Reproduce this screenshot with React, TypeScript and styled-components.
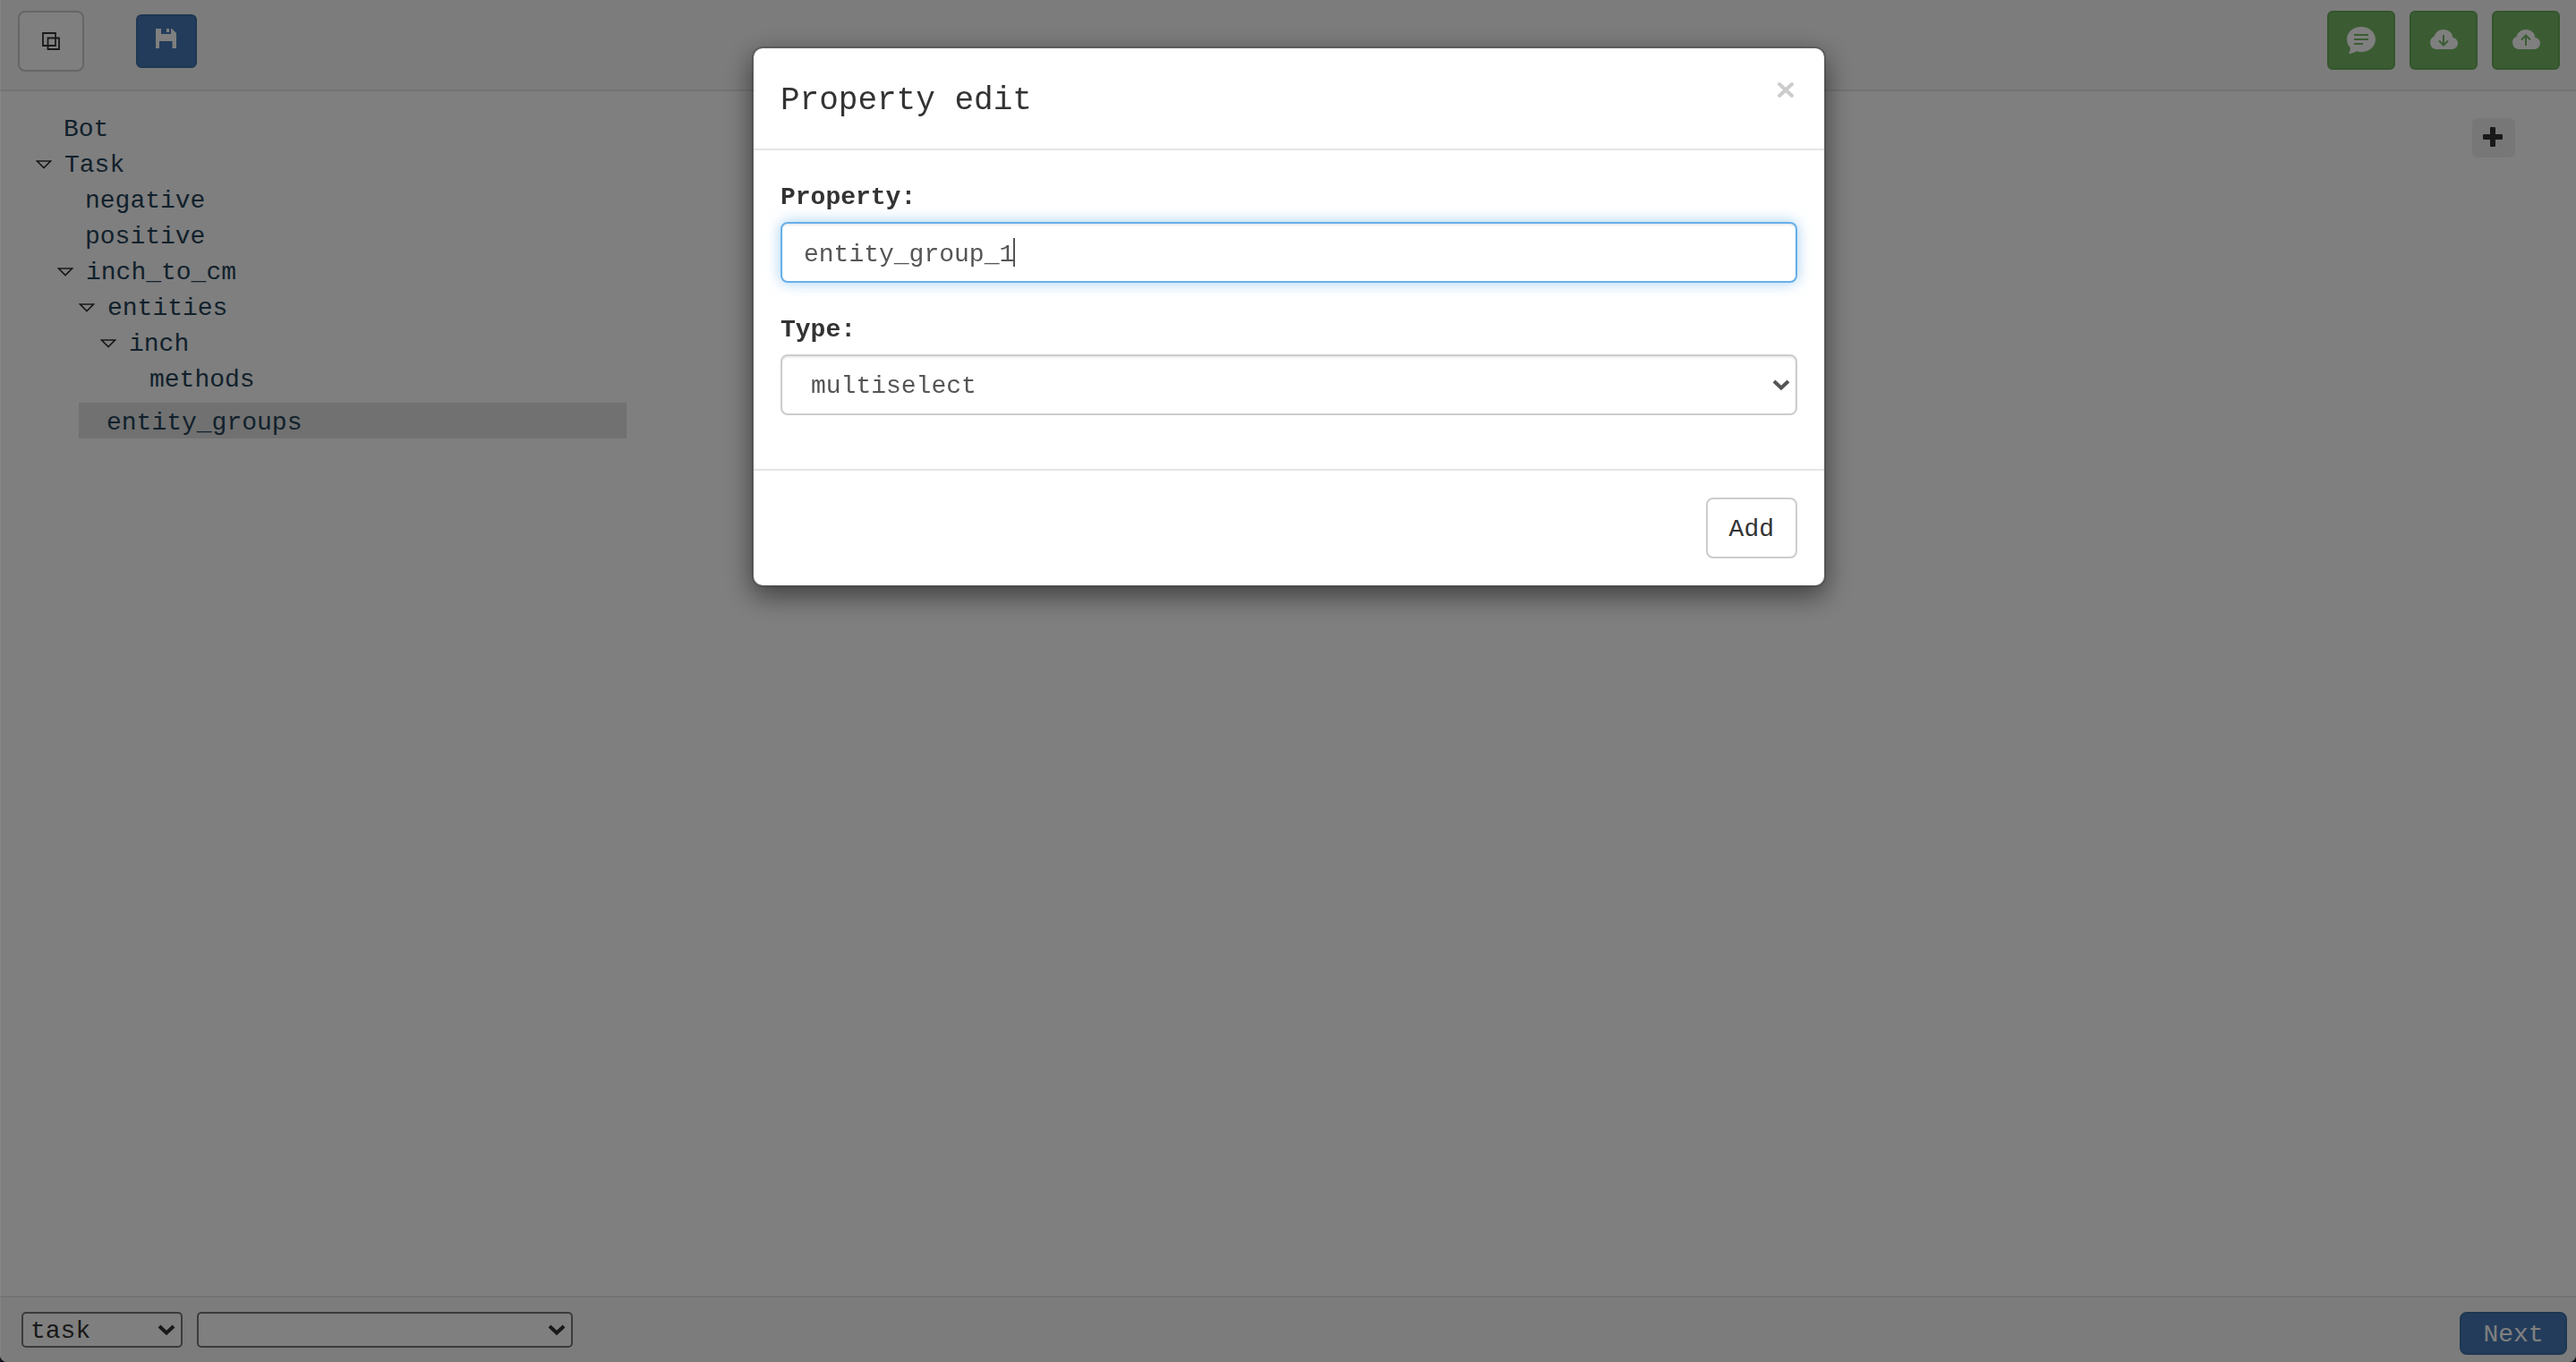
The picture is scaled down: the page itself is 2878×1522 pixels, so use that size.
import React, { useState } from "react";
import styled, { createGlobalStyle, css } from "styled-components";

const GlobalStyle = createGlobalStyle`
  *, *::before, *::after { box-sizing: border-box; }
  html { background: #10182c; }
  body {
    margin: 0;
    font-family: "Courier New", "Liberation Mono", monospace;
    font-size: 28px;
    line-height: 40px;
    color: #333;
  }
  button, input, select { font: inherit; margin: 0; }
`;

const Page = styled.div`
  display: flex;
  flex-direction: column;
  min-height: 100vh;
  overflow: hidden;
  border-radius: 0 0 8px 8px;
  background: #fff;
`;

const Toolbar = styled.header`
  display: flex;
  justify-content: space-between;
  align-items: flex-start;
  height: 102px;
  padding: 12px 18px 0 20px;
  background: #f8f8f8;
  border-bottom: 2px solid #e7e7e7;
`;

const ToolGroup = styled.div<{ $gap: number }>`
  display: flex;
  align-items: center;
  gap: ${(p) => p.$gap}px;
`;

const tones = {
  plain: css`
    background: #fff;
    border-color: #ccc;
    color: #333;
  `,
  primary: css`
    background: #4679b7;
    border-color: #3c6ea5;
    color: #fff;
  `,
  success: css`
    background: #76b866;
    border-color: #68aa58;
    color: #fff;
  `,
};

const Button = styled.button<{ $tone: keyof typeof tones }>`
  display: inline-flex;
  align-items: center;
  justify-content: center;
  padding: 4px 24px 0;
  border: 2px solid;
  border-radius: 8px;
  cursor: pointer;
  ${(p) => tones[p.$tone]}
`;

const CopyButton = styled(Button)`
  width: 74px;
  height: 68px;
  padding: 0;
`;

const SaveButton = styled(Button)`
  width: 68px;
  height: 60px;
  padding: 0 2px 6px 0;
  border-radius: 6px;
`;

const CloudButton = styled(Button)`
  width: 76px;
  height: 66px;
  padding: 0;
  border-radius: 6px;
`;

const NextButton = styled(Button)`
  min-width: 120px;
  height: 48px;
`;

const AddButton = styled(Button)`
  height: 68px;
`;

const Main = styled.main`
  display: flex;
  flex: 1;
  justify-content: space-between;
  align-items: flex-start;
  padding: 20px 68px 0 40px;
`;

const Tree = styled.ul`
  width: 660px;
  margin: 0;
  padding: 0;
  list-style: none;
`;

const TreeRow = styled.li<{ $level: number; $selected?: boolean }>`
  display: flex;
  align-items: center;
  height: 40px;
  margin-left: ${(p) => p.$level * 24}px;
  color: #244258;
  ${(p) =>
    p.$selected &&
    css`
      margin-top: 8px;
      background: #e2e2e2;
    `}
`;

const Toggle = styled.button`
  display: flex;
  width: 32px;
  padding: 4px 0 0;
  border: 0;
  background: none;
  color: #333;
  cursor: pointer;
`;

const NodeLink = styled.a<{ $leaf: boolean }>`
  padding-top: 6px;
  padding-left: ${(p) => (p.$leaf ? 31 : 0)}px;
  color: inherit;
  text-decoration: none;
`;

const PlusButton = styled.button`
  display: flex;
  align-items: center;
  justify-content: center;
  width: 48px;
  height: 44px;
  margin-top: 10px;
  padding: 0 2px 2px 0;
  border: 0;
  border-radius: 6px;
  background: #efefef;
  color: #333;
  cursor: pointer;
`;

const BottomBar = styled.footer`
  display: flex;
  justify-content: space-between;
  align-items: flex-start;
  padding: 16px 10px 8px 24px;
  background: #f8f8f8;
  border-top: 2px solid #e7e7e7;
`;

const SelectBox = styled.div<{ $width: string }>`
  display: grid;
  width: ${(p) => p.$width};

  > * {
    grid-area: 1 / 1;
  }
  > svg {
    place-self: center end;
    margin-right: 8px;
    pointer-events: none;
  }
`;

const CompactSelect = styled.select`
  appearance: none;
  width: 100%;
  height: 40px;
  padding: 4px 40px 0 8px;
  border: 2px solid #767676;
  border-radius: 5px;
  background: #fff;
  color: #333;
  line-height: 32px;
`;

const fieldStyle = css`
  width: 100%;
  height: 68px;
  border: 2px solid #ccc;
  border-radius: 8px;
  background: #fff;
  box-shadow: inset 0 2px 2px rgba(0, 0, 0, 0.075);
  color: #555;
  outline: 0;
`;

const InputWrap = styled.div`
  position: relative;
`;

const TextInput = styled.input`
  ${fieldStyle}
  display: block;
  padding: 4px 24px 0;
  caret-color: transparent;

  &:focus {
    border-color: #66afe9;
    box-shadow: inset 0 2px 2px rgba(0, 0, 0, 0.075), 0 0 16px rgba(102, 175, 233, 0.6);
  }
`;

const Caret = styled.span`
  position: absolute;
  top: 18px;
  width: 2px;
  height: 32px;
  margin-left: 25px;
  background: #555;
  pointer-events: none;
`;

const FieldSelect = styled.select`
  ${fieldStyle}
  appearance: none;
  padding: 4px 48px 0 32px;
`;

const Backdrop = styled.div`
  position: fixed;
  inset: 0;
  padding: 52px 0 0 1px;
  border-left: 1px solid rgba(255, 255, 255, 0.06);
  background: rgba(0, 0, 0, 0.5);
`;

const Dialog = styled.form`
  max-width: 1200px;
  margin: 0 auto;
  border: 2px solid rgba(0, 0, 0, 0.2);
  border-radius: 12px;
  background: #fff;
  background-clip: padding-box;
  box-shadow: 0 10px 30px rgba(0, 0, 0, 0.5);
`;

const DialogHeader = styled.div`
  display: flex;
  justify-content: space-between;
  align-items: flex-start;
  height: 114px;
  padding: 32px 30px 0;
  border-bottom: 2px solid #e5e5e5;
`;

const DialogTitle = styled.h4`
  margin: 0;
  font-size: 36px;
  font-weight: 400;
  line-height: 54px;
`;

const CloseButton = styled.button`
  display: flex;
  padding: 4px 3px;
  border: 0;
  background: none;
  color: #ccc;
  cursor: pointer;
`;

const DialogBody = styled.div`
  padding: 30px;
`;

const Field = styled.div`
  margin-bottom: 30px;
`;

const Label = styled.label`
  display: block;
  padding: 3px 0 7px;
  font-weight: 700;
`;

const DialogFooter = styled.div`
  display: flex;
  justify-content: flex-end;
  padding: 30px;
  border-top: 2px solid #e5e5e5;
`;

const Chevron = ({ color = "#333" }: { color?: string }) => (
  <svg width="20" height="14" viewBox="0 0 20 14" fill="none" stroke={color} strokeWidth="4">
    <path d="M2 3L10 10.500L18 3" />
  </svg>
);

const CopyIcon = () => (
  <svg width="20" height="20" viewBox="0 0 20 20" fill="none" stroke="currentColor" strokeWidth="1.800">
    <path d="M1 1H15V15H1ZM6.500 6.500H19V19H6.500Z" />
  </svg>
);

const SaveIcon = () => (
  <svg width="23" height="22" viewBox="0 0 23 22" fill="currentColor">
    <path d="M0 0H6V6H17V0H18L23 5V22H18.500V14H4V22H0ZM12 0H15V4H12Z" />
  </svg>
);

const ChatIcon = () => (
  <svg width="32" height="30" viewBox="0 0 32 30">
    <path fill="currentColor" d="M16 0C25 0 32 6 32 14S25 28 16 28C14 28 12.500 27.700 11 27.200C8.500 28.800 5.500 29.600 2 30C3.500 27.500 4 25.500 3.800 23.200C1.500 21 0 17.700 0 14C0 6 7 0 16 0Z" />
    <path stroke="#76b866" strokeWidth="2" d="M8 9H24M8 14H24M8 19H18" />
  </svg>
);

const CloudIcon = ({ up }: { up?: boolean }) => (
  <svg width="32" height="24" viewBox="0 0 32 24">
    <path fill="currentColor" d="M7.500 22A7.500 7.500 0 0 1 5.600 7.700C6.500 3.500 11 0 16 0C21.500 0 26 3.700 26.300 9C29.500 9.400 32 12 32 15.300C32 19 29 22 25.300 22Z" />
    <path
      fill="none"
      stroke="#76b866"
      strokeWidth="2"
      d={up ? "M16 18V7M11 11.500L16 6.500L21 11.500" : "M16 6V17M11 12.500L16 17.500L21 12.500"}
    />
  </svg>
);

const PlusIcon = () => (
  <svg width="22" height="22" viewBox="0 0 22 22" fill="currentColor">
    <rect x="8" width="6" height="22" rx="1" />
    <rect y="8" width="22" height="6" rx="1" />
  </svg>
);

const CloseIcon = () => (
  <svg width="20" height="20" viewBox="0 0 20 20" fill="none" stroke="currentColor" strokeWidth="4" strokeLinecap="round">
    <path d="M3 4L17 17M17 4L3 17" />
  </svg>
);

const TriangleIcon = () => (
  <svg width="18" height="10" viewBox="0 0 18 10" fill="none" stroke="currentColor" strokeWidth="1.700">
    <path d="M1.500 1H16.500L9 8.500Z" />
  </svg>
);

type Node = { name: string; level: number; leaf?: boolean; selected?: boolean };

const nodes: Node[] = [
  { name: "Bot", level: 0, leaf: true },
  { name: "Task", level: 0 },
  { name: "negative", level: 1, leaf: true },
  { name: "positive", level: 1, leaf: true },
  { name: "inch_to_cm", level: 1 },
  { name: "entities", level: 2 },
  { name: "inch", level: 3 },
  { name: "methods", level: 4, leaf: true },
  { name: "entity_groups", level: 2, leaf: true, selected: true },
];

export default function App() {
  const [property, setProperty] = useState("entity_group_1");
  const [caret, setCaret] = useState(property.length);

  return (
    <>
      <GlobalStyle />
      <Page>
        <Toolbar>
          <ToolGroup $gap={58}>
            <CopyButton $tone="plain" aria-label="Copy"><CopyIcon /></CopyButton>
            <SaveButton $tone="primary" aria-label="Save"><SaveIcon /></SaveButton>
          </ToolGroup>
          <ToolGroup $gap={16}>
            <CloudButton $tone="success" aria-label="Chat"><ChatIcon /></CloudButton>
            <CloudButton $tone="success" aria-label="Download"><CloudIcon /></CloudButton>
            <CloudButton $tone="success" aria-label="Upload"><CloudIcon up /></CloudButton>
          </ToolGroup>
        </Toolbar>
        <Main>
          <Tree>
            {nodes.map((n) => (
              <TreeRow key={n.name} $level={n.level} $selected={n.selected}>
                {!n.leaf && <Toggle aria-label={`Collapse ${n.name}`}><TriangleIcon /></Toggle>}
                <NodeLink href={`#${n.name}`} $leaf={!!n.leaf}>{n.name}</NodeLink>
              </TreeRow>
            ))}
          </Tree>
          <PlusButton aria-label="Add property"><PlusIcon /></PlusButton>
        </Main>
        <BottomBar>
          <ToolGroup $gap={16}>
            <SelectBox $width="180px">
              <CompactSelect aria-label="Node kind" defaultValue="task">
                <option>task</option>
              </CompactSelect>
              <Chevron />
            </SelectBox>
            <SelectBox $width="420px">
              <CompactSelect aria-label="Node" defaultValue="">
                <option value=""></option>
              </CompactSelect>
              <Chevron />
            </SelectBox>
          </ToolGroup>
          <NextButton $tone="primary">Next</NextButton>
        </BottomBar>
      </Page>
      <Backdrop>
        <Dialog role="dialog" aria-labelledby="dialog-title" onSubmit={(e) => e.preventDefault()}>
          <DialogHeader>
            <DialogTitle id="dialog-title">Property edit</DialogTitle>
            <CloseButton type="button" aria-label="Close"><CloseIcon /></CloseButton>
          </DialogHeader>
          <DialogBody>
            <Field>
              <Label htmlFor="property">Property:</Label>
              <InputWrap>
                <TextInput
                  id="property"
                  autoFocus
                  value={property}
                  onChange={(e) => setProperty(e.target.value)}
                  onSelect={(e) => setCaret(e.currentTarget.selectionEnd ?? property.length)}
                  onFocus={(e) => e.currentTarget.setSelectionRange(property.length, property.length)}
                />
                <Caret style={{ left: `${caret}ch` }} />
              </InputWrap>
            </Field>
            <Field>
              <Label htmlFor="type">Type:</Label>
              <SelectBox $width="100%">
                <FieldSelect id="type" defaultValue="multiselect">
                  <option>multiselect</option>
                </FieldSelect>
                <Chevron color="#555" />
              </SelectBox>
            </Field>
          </DialogBody>
          <DialogFooter>
            <AddButton $tone="plain" type="submit">Add</AddButton>
          </DialogFooter>
        </Dialog>
      </Backdrop>
    </>
  );
}
